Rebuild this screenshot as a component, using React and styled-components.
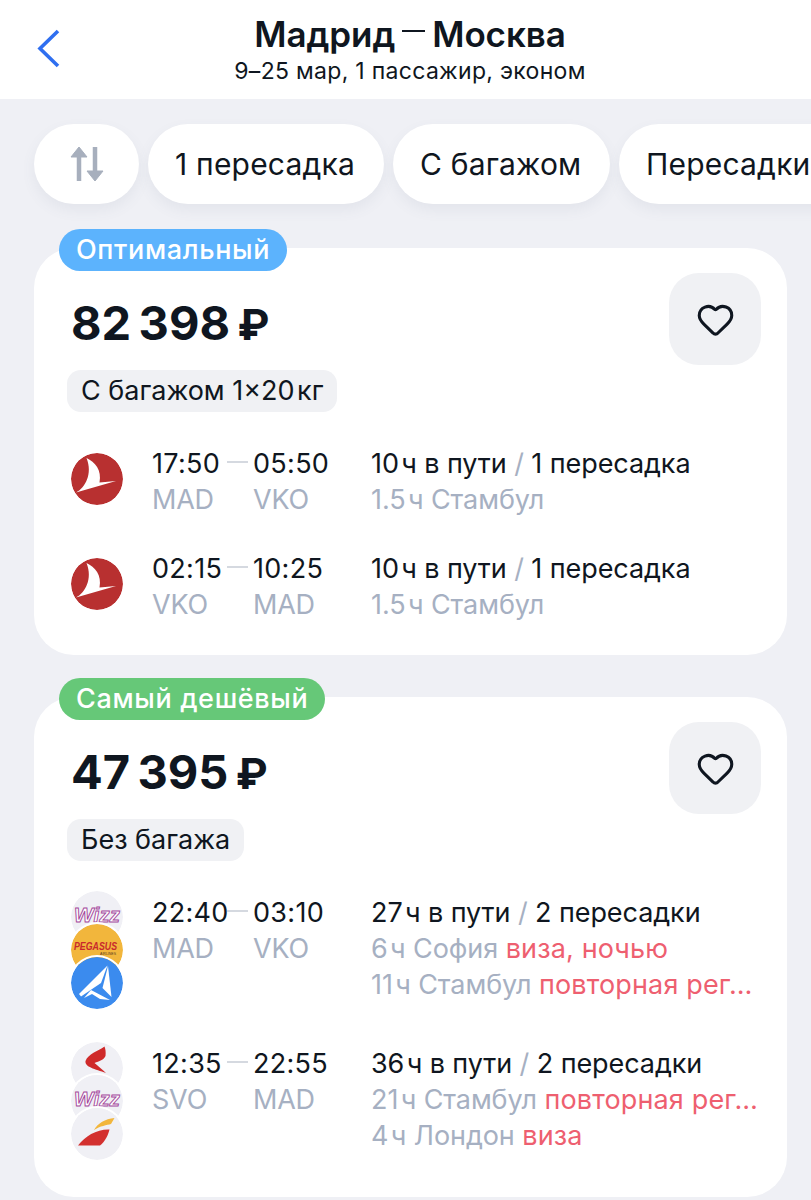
import React from "react"
import styled, { createGlobalStyle } from "styled-components"
import { Heart } from "lucide-react"

const Global = createGlobalStyle`
html, body {
  margin: 0;
  padding: 0;
  background: #eff0f5;
}
body {
  font-family: Inter, "Noto Sans", sans-serif;
  color: #0f1620;
  overflow: hidden;
}
`
const Page = styled.div`
  width: 811px;
  height: 1200px;
  overflow: hidden;
`
const Header = styled.header`
  height: 99px;
  background: #fff;
  display: flex;
  flex-direction: column;
  align-items: center;
  position: relative;
  padding-left: 9px;
  box-sizing: border-box;
`
const Back = styled.svg`
  position: absolute;
  left: 36px;
  top: 29px;
`
const Title = styled.h1`
  margin: 13px 0 0;
  font-size: 35px;
  line-height: 42px;
  font-weight: 600;
  letter-spacing: -0.1px;
  display: flex;
  align-items: center;
`
const TitleDash = styled.i`
  display: block;
  width: 23px;
  height: 2px;
  margin: -7px 7px 0 7px;
  background: #0f1620;
`
const Sub = styled.div`
  font-size: 23px;
  line-height: 28px;
  margin-top: 2px;
  letter-spacing: 0.3px;
`
const Filters = styled.div`
  display: flex;
  gap: 9px;
  padding: 25px 0 20px 34px;
  height: 80px;
  overflow: hidden;
`
const Pill = styled.div`
  flex: none;
  height: 80px;
  border-radius: 40px;
  background: #fff;
  box-shadow: 0 6px 14px rgba(90, 100, 130, 0.08);
  font-size: 30px;
  letter-spacing: 0.2px;
  display: flex;
  align-items: center;
  padding: 0 27px;
  width: ${(p) => p.$w}px;
  box-sizing: border-box;
  justify-content: ${(p) => (p.$icon ? "center" : "flex-start")};
  white-space: nowrap;
`
const Card = styled.section`
  position: relative;
  margin: ${(p) => p.$top}px 24px 0 34px;
  background: #fff;
  border-radius: 40px;
  padding: 25px 26px ${(p) => p.$bottom}px 37px;
`
const Badge = styled.div`
  position: absolute;
  left: 25px;
  top: -19px;
  height: 42px;
  border-radius: 21px;
  padding: 0 17px;
  background: ${(p) => p.$color};
  color: #fff;
  font-size: 27px;
  font-weight: 500;
  line-height: 42px;
  letter-spacing: 0.65px;
`
const Top = styled.div`
  display: flex;
  justify-content: space-between;
  align-items: flex-start;
`
const Price = styled.div`
  font-size: 47px;
  line-height: 50px;
  font-weight: 700;
  margin: 25px 0 0 0;
`
const Rouble = styled.span`
  font-size: 43px;
`
const Fav = styled.div`
  width: 92px;
  height: 92px;
  border-radius: 30px;
  background: #f0f1f4;
  display: flex;
  align-items: center;
  justify-content: center;
`
const Tag = styled.div`
  display: inline-block;
  margin: 5px 0 0 -4px;
  height: 42px;
  line-height: 42px;
  padding: 0 14px;
  border-radius: 14px;
  background: #f0f1f4;
  font-size: 27px;
`
const Rows = styled.div`
  display: flex;
  flex-direction: column;
  gap: 33px;
  margin-top: ${(p) => (p.$stacked ? 30 : 34)}px;
`
const Row = styled.div`
  display: flex;
`
const LogoStack = styled.div`
  flex: none;
  width: 52px;
  margin-right: 29px;
  padding-top: ${(p) => (p.$stacked ? 0 : 7)}px;
  display: flex;
  flex-direction: column;
`
const LogoWrap = styled.svg`
  display: block;
  width: 52px;
  height: 52px;
  border-radius: 50%;
  box-shadow: 0 0 0 2px #fff;
  position: relative;
  & + & {
    margin-top: -19px;
  }
`
const Texts = styled.div`
  display: flex;
  min-width: 0;
  flex: 1;
  padding-top: ${(p) => (p.$stacked ? 4 : 0)}px;
  font-size: 27px;
  line-height: 36px;
`
const Stop = styled.div`
  flex: none;
  width: ${(p) => p.$w}px;
  letter-spacing: 0.3px;
`
const Dash = styled.i`
  flex: none;
  display: block;
  width: 21px;
  height: 2px;
  margin: 15px 5px 0 0;
  background: #d5d9e0;
`
const Code = styled.div`
  color: #a6b0c2;
  letter-spacing: -0.2px;
`
const Info = styled.div`
  flex: 1;
  min-width: 0;
  letter-spacing: -0.08px;
`
const Line = styled.div`
  white-space: nowrap;
  color: ${(p) => (p.$muted ? "#a6b0c2" : "inherit")};
`
const Slash = styled.span`
  color: #a6b0c2;
`
const Warn = styled.span`
  color: #ee5f70;
  letter-spacing: 0.15px;
`

const SortIcon = () => (
  <svg width="36" height="36" viewBox="0 0 36 36" fill="none" stroke="#a7afbd" strokeWidth="4.5">
    <path d="M10 35V4" />
    <path d="M26 1v31" />
    <path d="M10 1l8 10H2z" fill="#a7afbd" strokeWidth="1" strokeLinejoin="round" />
    <path d="M26 35l-8-10h16z" fill="#a7afbd" strokeWidth="1" strokeLinejoin="round" />
  </svg>
)

const Turkish = () => (
  <LogoWrap viewBox="0 0 52 52">
    <circle cx="26" cy="26" r="26" fill="#b83030" />
    <path d="M15.500 5C24 9 31 17 28.500 29.500L45 28 5 39.500C14 35 22 21 15.500 5z" fill="#fff" />
  </LogoWrap>
)

const Wizz = () => (
  <LogoWrap viewBox="0 0 52 52">
    <circle cx="26" cy="26" r="26" fill="#f0f0f5" />
    <text
      x="3"
      y="31"
      textLength="46"
      lengthAdjust="spacingAndGlyphs"
      fontFamily="'Liberation Sans', sans-serif"
      fontSize="20"
      fontWeight="700"
      fontStyle="italic"
      fill="#fff"
      stroke="#a4479b"
      strokeWidth="0.9"
    >
      Wizz
    </text>
  </LogoWrap>
)

const Pegasus = () => (
  <LogoWrap viewBox="0 0 52 52">
    <circle cx="26" cy="26" r="26" fill="#f2b63c" />
    <text
      x="3"
      y="26"
      textLength="43"
      lengthAdjust="spacingAndGlyphs"
      fontFamily="'Liberation Sans', sans-serif"
      fontSize="10"
      fontWeight="700"
      fontStyle="italic"
      fill="#c8282c"
    >
      PEGASUS
    </text>
    <text x="45" y="31" textAnchor="end" fontFamily="'Liberation Sans', sans-serif" fontSize="3.5" fill="#5a3a20">
      AIRLINES
    </text>
  </LogoWrap>
)

const Blue = () => (
  <LogoWrap viewBox="0 0 52 52">
    <circle cx="26" cy="26" r="26" fill="#3b8bee" />
    <path d="M36.500 8.500L8 37l2 2.500 20-13.500z" fill="#fff" />
    <path d="M37 9l3.500 31-9-9z" fill="#fff" />
    <path d="M20 33l19 10-10-1-8-5-8 4z" fill="#fff" />
  </LogoWrap>
)

const RedFlag = () => (
  <LogoWrap viewBox="0 0 52 52">
    <circle cx="26" cy="26" r="26" fill="#f0f0f5" />
    <path
      d="M33.500 4.500C27 9 17 12 14.500 19C13.500 25 24 27 35 31C31 27 27 24 23.500 21C28 19 33 18 34.500 14C35 10 34.500 7 33.500 4.500z"
      fill="#cf2a2a"
    />
  </LogoWrap>
)

const Iberia = () => (
  <LogoWrap viewBox="0 0 52 52">
    <circle cx="26" cy="26" r="26" fill="#f0f0f5" />
    <path d="M43.500 10C34 11 27 15 23 22c6-4 13-5 17-6z" fill="#f2b63c" />
    <path d="M38.500 21.500C26 21 14 28 7 37.500h22c5-4 8-10 9.500-16z" fill="#d3302f" />
  </LogoWrap>
)

const logoParts = { turkish: Turkish, wizz: Wizz, pegasus: Pegasus, blue: Blue, red: RedFlag, iberia: Iberia }

const FlightRow = ({ stacked, logos, from, to, fromCode, toCode, lines }) => (
  <Row>
    <LogoStack $stacked={stacked}>
      {logos.map((name, i) => {
        const Logo = logoParts[name]
        return <Logo key={i} />
      })}
    </LogoStack>
    <Texts $stacked={stacked}>
      <Stop $w={75}>
        {from}
        <Code>{fromCode}</Code>
      </Stop>
      <Dash />
      <Stop $w={118}>
        {to}
        <Code>{toCode}</Code>
      </Stop>
      <Info>{lines}</Info>
    </Texts>
  </Row>
)

const FlightCard = ({ badge, color, price, tag, top, bottom, stacked, children }) => (
  <Card $top={top} $bottom={bottom}>
    <Badge $color={color}>{badge}</Badge>
    <Top>
      <Price>
        {price}
        {"\u2009"}
        <Rouble>₽</Rouble>
      </Price>
      <Fav>
        <Heart size={39} strokeWidth={1.9} color="#0f1620" />
      </Fav>
    </Top>
    <Tag>{tag}</Tag>
    <Rows $stacked={stacked}>{children}</Rows>
  </Card>
)

export default function App() {
  return (
    <Page>
      <Global />
      <Header>
        <Back width="26" height="40" viewBox="0 0 26 40" fill="none" stroke="#2f6ff0" strokeWidth="3.6">
          <path d="M22 2L4 19.500 22 37" />
        </Back>
        <Title>
          Мадрид<TitleDash />Москва
        </Title>
        <Sub>9–25 мар, 1 пассажир, эконом</Sub>
      </Header>
      <Filters>
        <Pill $icon $w={105}>
          <SortIcon />
        </Pill>
        <Pill $w={236}>1 пересадка</Pill>
        <Pill $w={217}>С багажом</Pill>
        <Pill $w={260}>Пересадки</Pill>
      </Filters>
      <FlightCard
        badge="Оптимальный"
        color="#5cb3fd"
        price={"82\u2009398"}
        tag={"С багажом 1×20\u200aкг"}
        top={24}
        bottom={32}
      >
        <FlightRow
          logos={["turkish"]}
          from="17:50"
          to="05:50"
          fromCode="MAD"
          toCode="VKO"
          lines={
            <>
              <Line>
                {"10\u200aч в пути "}<Slash>/</Slash> 1 пересадка
              </Line>
              <Line $muted>{"1.5\u200aч Стамбул"}</Line>
            </>
          }
        />
        <FlightRow
          logos={["turkish"]}
          from="02:15"
          to="10:25"
          fromCode="VKO"
          toCode="MAD"
          lines={
            <>
              <Line>
                {"10\u200aч в пути "}<Slash>/</Slash> 1 пересадка
              </Line>
              <Line $muted>{"1.5\u200aч Стамбул"}</Line>
            </>
          }
        />
      </FlightCard>
      <FlightCard
        badge="Самый дешёвый"
        color="#66c878"
        price={"47\u2009395"}
        tag="Без багажа"
        top={42}
        bottom={37}
        stacked
      >
        <FlightRow
          stacked
          logos={["wizz", "pegasus", "blue"]}
          from="22:40"
          to="03:10"
          fromCode="MAD"
          toCode="VKO"
          lines={
            <>
              <Line>
                {"27\u200aч в пути "}<Slash>/</Slash> 2 пересадки
              </Line>
              <Line $muted>
                {"6\u200aч София "}<Warn>виза, ночью</Warn>
              </Line>
              <Line $muted>
                {"11\u200aч Стамбул "}<Warn>повторная рег…</Warn>
              </Line>
            </>
          }
        />
        <FlightRow
          stacked
          logos={["red", "wizz", "iberia"]}
          from="12:35"
          to="22:55"
          fromCode="SVO"
          toCode="MAD"
          lines={
            <>
              <Line>
                {"36\u200aч в пути "}<Slash>/</Slash> 2 пересадки
              </Line>
              <Line $muted>
                {"21\u200aч Стамбул "}<Warn>повторная рег…</Warn>
              </Line>
              <Line $muted>
                {"4\u200aч Лондон "}<Warn>виза</Warn>
              </Line>
            </>
          }
        />
      </FlightCard>
    </Page>
  )
}
